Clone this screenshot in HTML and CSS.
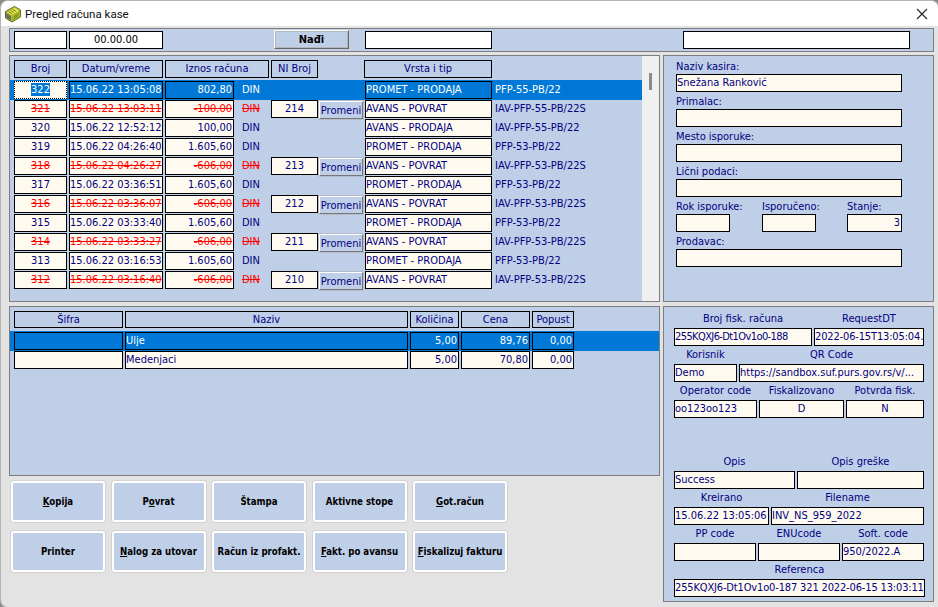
FILE: index.html
```html
<!DOCTYPE html>
<html lang="en">
<head>
  <meta charset="UTF-8" />
  <title>Pregled računa kase</title>
  <link rel="stylesheet" href="styles.css">
</head>
<body>

<div class="window">
  <header class="titlebar">
    <svg class="app-icon" width="18" height="18" viewBox="0 0 18 18">
      <path d="M1.5 6.5 L10.5 1.5 L16.5 5 L16.5 12 L8 17 L1.5 13 Z" fill="#c9cf2e" stroke="#55602c"/>
      <path d="M2 7 L8 10.5 L16 5.5 L10.5 2.2 Z" fill="#e6e84a" stroke="#8a9430" stroke-width="0.6"/>
      <path d="M8 10.5 L8 16.5 L16.2 11.8 L16.2 5.6 Z" fill="#a9b527"/>
      <path d="M4.5 6.5 L8 8.5 M6.5 5.5 L10 7.5 M8.5 4.4 L12 6.4" stroke="#76831f"/>
      <path d="M9.5 12 L14.5 9 M9.5 14 L14.5 11" stroke="#78851f"/>
      <path d="M2.2 8 L2.2 12.6 L7.2 15.8 L7.2 11.2 Z" fill="#5f7360"/>
    </svg>
    <span class="title-text">Pregled računa kase</span>
    <svg class="close-icon" width="12" height="12" viewBox="0 0 12 12">
      <path d="M1 1 L11 11 M11 1 L1 11" stroke="#222" stroke-width="1.1" fill="none"/>
    </svg>
  </header>

  <div class="content">
    <section class="panel search-bar">
      <div class="inp w53"></div>
      <div class="inp w94 center">00.00.00</div>
      <button class="find-btn">Nađi</button>
      <div class="inp w127"></div>
      <div class="inp w227"></div>
    </section>

    <div class="columns">
      <div class="col-left">
        <section class="panel list-panel">
          <div class="scrollbar"><span class="thumb"></span></div>
          <div class="row head-row">
            <div class="cell head">Broj</div>
            <div class="cell head">Datum/vreme</div>
            <div class="cell head span2">Iznos računa</div>
            <div class="cell head">NI Broj</div>
            <div></div>
            <div class="cell head vrsta-head">Vrsta i tip</div>
          </div>

          <div class="row selected">
            <div class="cell center focus"><span class="sel-text">322</span></div>
            <div class="cell">15.06.22 13:05:08</div>
            <div class="cell right">802,80</div>
            <div class="din">DIN</div>
            <div></div><div></div>
            <div class="cell">PROMET - PRODAJA</div>
            <div class="doc">PFP-55-PB/22</div>
          </div>
          <div class="row void">
            <div class="cell center"><s>321</s></div>
            <div class="cell"><s>15.06.22 13:03:11</s></div>
            <div class="cell right"><s>-100,00</s></div>
            <div class="din"><s>DIN</s></div>
            <div class="cell center">214</div>
            <button class="change-btn">Promeni</button>
            <div class="cell">AVANS - POVRAT</div>
            <div class="doc">IAV-PFP-55-PB/22S</div>
          </div>
          <div class="row">
            <div class="cell center">320</div>
            <div class="cell">15.06.22 12:52:12</div>
            <div class="cell right">100,00</div>
            <div class="din">DIN</div>
            <div></div><div></div>
            <div class="cell">AVANS - PRODAJA</div>
            <div class="doc">IAV-PFP-55-PB/22</div>
          </div>
          <div class="row">
            <div class="cell center">319</div>
            <div class="cell">15.06.22 04:26:40</div>
            <div class="cell right">1.605,60</div>
            <div class="din">DIN</div>
            <div></div><div></div>
            <div class="cell">PROMET - PRODAJA</div>
            <div class="doc">PFP-53-PB/22</div>
          </div>
          <div class="row void">
            <div class="cell center"><s>318</s></div>
            <div class="cell"><s>15.06.22 04:26:27</s></div>
            <div class="cell right"><s>-606,00</s></div>
            <div class="din"><s>DIN</s></div>
            <div class="cell center">213</div>
            <button class="change-btn">Promeni</button>
            <div class="cell">AVANS - POVRAT</div>
            <div class="doc">IAV-PFP-53-PB/22S</div>
          </div>
          <div class="row">
            <div class="cell center">317</div>
            <div class="cell">15.06.22 03:36:51</div>
            <div class="cell right">1.605,60</div>
            <div class="din">DIN</div>
            <div></div><div></div>
            <div class="cell">PROMET - PRODAJA</div>
            <div class="doc">PFP-53-PB/22</div>
          </div>
          <div class="row void">
            <div class="cell center"><s>316</s></div>
            <div class="cell"><s>15.06.22 03:36:07</s></div>
            <div class="cell right"><s>-606,00</s></div>
            <div class="din"><s>DIN</s></div>
            <div class="cell center">212</div>
            <button class="change-btn">Promeni</button>
            <div class="cell">AVANS - POVRAT</div>
            <div class="doc">IAV-PFP-53-PB/22S</div>
          </div>
          <div class="row">
            <div class="cell center">315</div>
            <div class="cell">15.06.22 03:33:40</div>
            <div class="cell right">1.605,60</div>
            <div class="din">DIN</div>
            <div></div><div></div>
            <div class="cell">PROMET - PRODAJA</div>
            <div class="doc">PFP-53-PB/22</div>
          </div>
          <div class="row void">
            <div class="cell center"><s>314</s></div>
            <div class="cell"><s>15.06.22 03:33:27</s></div>
            <div class="cell right"><s>-606,00</s></div>
            <div class="din"><s>DIN</s></div>
            <div class="cell center">211</div>
            <button class="change-btn">Promeni</button>
            <div class="cell">AVANS - POVRAT</div>
            <div class="doc">IAV-PFP-53-PB/22S</div>
          </div>
          <div class="row">
            <div class="cell center">313</div>
            <div class="cell">15.06.22 03:16:53</div>
            <div class="cell right">1.605,60</div>
            <div class="din">DIN</div>
            <div></div><div></div>
            <div class="cell">PROMET - PRODAJA</div>
            <div class="doc">PFP-53-PB/22</div>
          </div>
          <div class="row void">
            <div class="cell center"><s>312</s></div>
            <div class="cell"><s>15.06.22 03:16:40</s></div>
            <div class="cell right"><s>-606,00</s></div>
            <div class="din"><s>DIN</s></div>
            <div class="cell center">210</div>
            <button class="change-btn">Promeni</button>
            <div class="cell">AVANS - POVRAT</div>
            <div class="doc">IAV-PFP-53-PB/22S</div>
          </div>
        </section>

        <section class="panel items-panel">
          <div class="item-row item-head">
            <div class="cell head">Šifra</div>
            <div class="cell head">Naziv</div>
            <div class="cell head">Količina</div>
            <div class="cell head">Cena</div>
            <div class="cell head">Popust</div>
          </div>
          <div class="item-row selected">
            <div class="cell"></div>
            <div class="cell">Ulje</div>
            <div class="cell right">5,00</div>
            <div class="cell right">89,76</div>
            <div class="cell right">0,00</div>
          </div>
          <div class="item-row">
            <div class="cell"></div>
            <div class="cell">Medenjaci</div>
            <div class="cell right">5,00</div>
            <div class="cell right">70,80</div>
            <div class="cell right">0,00</div>
          </div>
        </section>

        <div class="actions">
          <button class="action"><u>K</u>opija</button>
          <button class="action">P<u>o</u>vrat</button>
          <button class="action">Štampa</button>
          <button class="action">Aktivne stope</button>
          <button class="action"><u>G</u>ot.račun</button>
          <button class="action">Printer</button>
          <button class="action"><u>N</u>alog za utovar</button>
          <button class="action">Račun iz profakt.</button>
          <button class="action"><u>F</u>akt. po avansu</button>
          <button class="action"><u>F</u>iskalizuj fakturu</button>
        </div>
      </div>

      <div class="col-right">
        <section class="panel buyer-panel">
          <label class="lbl">Naziv kasira:</label>
          <div class="cell wide">Snežana Ranković</div>
          <label class="lbl">Primalac:</label>
          <div class="cell wide"></div>
          <label class="lbl">Mesto isporuke:</label>
          <div class="cell wide"></div>
          <label class="lbl">Lični podaci:</label>
          <div class="cell wide"></div>
          <div class="delivery">
            <div><label class="lbl">Rok isporuke:</label><div class="cell"></div></div>
            <div><label class="lbl">Isporučeno:</label><div class="cell"></div></div>
            <div><label class="lbl">Stanje:</label><div class="cell right">3</div></div>
          </div>
          <label class="lbl">Prodavac:</label>
          <div class="cell wide"></div>
        </section>

        <section class="panel fisc-panel">
          <div class="f-row r1">
            <div class="fld"><label>Broj fisk. računa</label><div class="cell code">255KQXJ6-Dt1Ov1o0-188</div></div>
            <div class="fld"><label>RequestDT</label><div class="cell tight">2022-06-15T13:05:04.</div></div>
          </div>
          <div class="f-row r2">
            <div class="fld"><label>Korisnik</label><div class="cell">Demo</div></div>
            <div class="fld"><label>QR Code</label><div class="cell">https://sandbox.suf.purs.gov.rs/v/...</div></div>
          </div>
          <div class="f-row r3 after-gap">
            <div class="fld"><label>Operator code</label><div class="cell">oo123oo123</div></div>
            <div class="fld"><label>Fiskalizovano</label><div class="cell center">D</div></div>
            <div class="fld"><label>Potvrda fisk.</label><div class="cell center">N</div></div>
          </div>
          <div class="f-row r4">
            <div class="fld"><label>Opis</label><div class="cell">Success</div></div>
            <div class="fld"><label>Opis greške</label><div class="cell"></div></div>
          </div>
          <div class="f-row r5">
            <div class="fld"><label>Kreirano</label><div class="cell">15.06.22 13:05:06</div></div>
            <div class="fld"><label>Filename</label><div class="cell">INV_NS_959_2022</div></div>
          </div>
          <div class="f-row r6">
            <div class="fld"><label>PP code</label><div class="cell"></div></div>
            <div class="fld"><label>ENUcode</label><div class="cell"></div></div>
            <div class="fld"><label>Soft. code</label><div class="cell">950/2022.A</div></div>
          </div>
          <div class="f-row r7">
            <div class="fld"><label>Referenca</label><div class="cell tight">255KQXJ6-Dt1Ov1o0-187 321 2022-06-15 13:03:11</div></div>
          </div>
        </section>
      </div>
    </div>
  </div>
</div>

</body>
</html>
```

FILE: styles.css
```css
* {
  margin: 0;
  padding: 0;
  box-sizing: border-box;
}

html, body {
  width: 938px;
  height: 607px;
  overflow: hidden;
  background: #8a8a8a;
  font-family: "DejaVu Sans Condensed", "DejaVu Sans", sans-serif;
  font-stretch: condensed;
  font-size: 11px;
  color: #000080;
}

.window {
  margin: 1px 0 0 1px;
  width: 937px;
  height: 606px;
  background: #e3e3e3;
  border-radius: 7px 7px 0 7px;
  overflow: hidden;
  box-shadow: 0 0 0 1px #b5b5b5;
}

.titlebar {
  height: 25px;
  background: #fff;
  display: flex;
  align-items: center;
  padding: 0 10px 0 3px;
  color: #111;
}

.app-icon {
  flex: none;
  margin-top: 1px;
}

.title-text {
  margin-left: 3px;
  font-family: Roboto, sans-serif;
  font-stretch: normal;
  font-size: 11.5px;
  letter-spacing: 0;
}

.close-icon {
  margin-left: auto;
}

.content {
  padding: 2px 0 0 8px;
}

.panel {
  background: #c0cfe8;
  border: 1px solid #7d7d7d;
}

/* top search strip */
.search-bar {
  width: 925px;
  height: 24px;
  display: flex;
  align-items: flex-start;
  padding: 2px 0 0 4px;
}

.inp {
  height: 18px;
  line-height: 16px;
  background: #fff;
  border: 1px solid #000;
  color: #000;
}

.w53 { width: 53px; }
.w94 { width: 94px; margin-left: 2px; }
.w127 { width: 127px; margin-left: 16px; }
.w227 { width: 227px; margin-left: 191px; }

.find-btn {
  width: 75px;
  height: 19px;
  margin: -1px 0 0 111px;
  font: inherit;
  font-weight: bold;
  color: #000;
  background: #c0cfe8;
  border: 1px solid;
  border-color: #fff #666 #666 #fff;
  outline: 1px solid #b5b5b5;
  outline-offset: -2px;
}

.columns {
  display: flex;
  gap: 3px;
  margin-top: 3px;
}

.col-left {
  width: 651px;
}

.col-right {
  width: 271px;
}

/* invoice list */
.list-panel {
  position: relative;
  height: 247px;
  padding-top: 4px;
}

.scrollbar {
  position: absolute;
  top: 0;
  right: 0;
  bottom: 0;
  width: 17px;
  background: #f0f0f0;
}

.thumb {
  position: absolute;
  top: 17px;
  left: 7px;
  width: 3px;
  height: 17px;
  background: #8b8b8b;
}

.row {
  display: grid;
  grid-template-columns: 53px 94px 69px 33px 47px 43px 127px 1fr;
  column-gap: 2px;
  height: 19px;
  width: 632px;
  padding-left: 4px;
}

.head-row {
  height: 21px;
}

.span2 {
  grid-column: span 2;
}

.vrsta-head {
  margin-left: -1px;
}

.cell {
  height: 18px;
  line-height: 16px;
  background: #fffaf0;
  border: 1px solid #000;
  white-space: nowrap;
  overflow: hidden;
}

.head {
  background: #c0cfe8;
  text-align: center;
}

.center { text-align: center; }
.right { text-align: right; padding-right: 1px; }

.din {
  line-height: 18px;
  padding-left: 6px;
}

.doc {
  line-height: 18px;
  padding-left: 1px;
  white-space: nowrap;
}

.change-btn {
  height: 18px;
  margin: 1px 0 0 -1px;
  width: 44px;
  padding-top: 2px;
  font: inherit;
  color: #000080;
  background: #c0cfe8;
  border: 1px solid;
  border-color: #fff #777 #777 #fff;
  box-shadow: 0 0 0 0.5px #a9a9a9;
  line-height: 14px;
}

.void s, .void .din {
  color: #f00;
}

.selected {
  background: #0078d7;
  box-shadow: 0 -1px 0 #0078d7;
}

.selected .cell, .selected .din, .selected .doc {
  background: #0078d7;
  color: #fff;
}

.selected .focus {
  background: #fffaf0;
  border: 1px dotted #000;
}

.sel-text {
  background: #0078d7;
  color: #fff;
}

/* invoice items */
.items-panel {
  height: 170px;
  margin-top: 4px;
  padding-top: 4px;
}

.item-row {
  display: grid;
  grid-template-columns: 109px 283px 49px 69px 42px;
  column-gap: 2px;
  height: 19px;
  padding-left: 4px;
}

.item-head {
  height: 21px;
}

.item-head .cell {
  height: 17px;
  line-height: 15px;
}

/* bottom buttons */
.actions {
  display: grid;
  grid-template-columns: repeat(5, 94px);
  column-gap: 6.5px;
  row-gap: 9px;
  margin: 5px 0 0 2px;
}

.action {
  height: 41px;
  font: inherit;
  font-family: "DejaVu Sans Condensed", "DejaVu Sans", sans-serif;
  font-size: 9.6px;
  font-weight: bold;
  white-space: nowrap;
  color: #000;
  background: #c0cfe8;
  border: 2px solid #fff;
  border-radius: 3px;
  box-shadow: 0 0 0 1px #d2d2d2;
}

/* right hand panels */
.buyer-panel {
  height: 247px;
  padding: 1px 0 0 12px;
}

.lbl {
  display: block;
  height: 17px;
  line-height: 20px;
  white-space: nowrap;
}

.wide {
  width: 226px;
}

.delivery {
  display: flex;
}

.delivery > div {
  width: 54px;
}

.delivery > div + div {
  margin-left: 32px;
}

.delivery > div:last-child {
  margin-left: 31px;
  width: 55px;
}

.fisc-panel {
  height: 296px;
  margin-top: 4px;
  padding: 3px 0 0 10px;
}

.f-row {
  display: flex;
  gap: 2px;
  width: 250px;
  height: 36px;
}

.fld label {
  display: block;
  height: 18px;
  line-height: 18px;
  text-align: center;
}

.after-gap {
  margin-bottom: 35px;
}

.code { letter-spacing: -0.6px; }
.tight { letter-spacing: -0.15px; }

.r1 .fld:nth-child(1) { width: 138px; }
.r1 .fld:nth-child(2) { width: 110px; }
.r2 .fld:nth-child(1) { width: 63px; }
.r2 .fld:nth-child(2) { width: 185px; }
.r3 .fld:nth-child(1) { width: 83px; }
.r3 .fld:nth-child(2) { width: 85px; }
.r3 .fld:nth-child(3) { width: 78px; }
.r4 .fld:nth-child(1) { width: 121px; }
.r4 .fld:nth-child(2) { width: 127px; }
.r5 .fld:nth-child(1) { width: 95px; }
.r5 .fld:nth-child(2) { width: 153px; }
.r6 .fld:nth-child(1) { width: 82px; }
.r6 .fld:nth-child(2) { width: 82px; }
.r6 .fld:nth-child(3) { width: 82px; }
.r7 .fld { width: 251px; }
```
